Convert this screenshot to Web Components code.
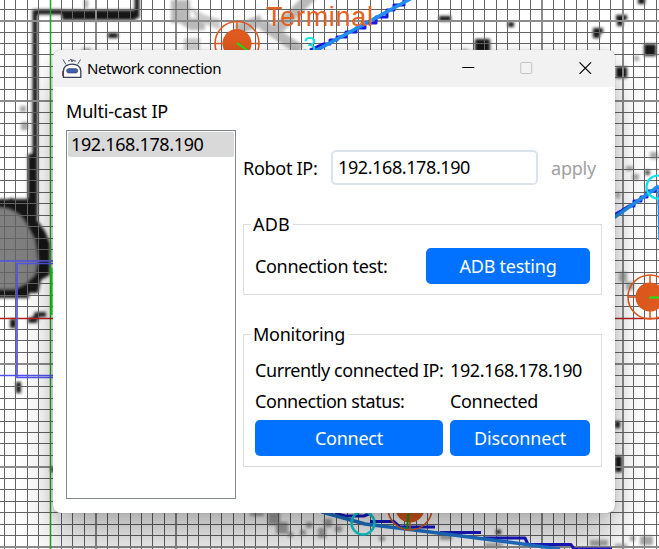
<!DOCTYPE html>
<html lang="en"><head><meta charset="utf-8"><title>Network connection</title>
<style>html,body{margin:0;width:659px;height:549px;overflow:hidden}body{font-family:"Noto Sans","Open Sans",sans-serif;font-size:18px;color:#000}</style></head>
<body>
<robot-desktop>
<map-canvas></map-canvas>
<app-window slot="window" heading="Network connection">
<network-panel></network-panel>
</app-window>
</robot-desktop>
<script>
class BaseElement extends HTMLElement{
  constructor(){super();this.attachShadow({mode:'open'}).innerHTML=this.render();}
  render(){return '<slot></slot>';}
}
customElements.define('robot-desktop',class extends BaseElement{
  render(){return `<style>:host{display:block;position:relative;width:659px;height:549px;overflow:hidden;background:#fff}
  ::slotted(app-window){position:absolute;left:53px;top:50px}</style><slot></slot><slot name="window"></slot>`;}
});
/* Spreads its text over a fixed advance width given by "fit". */
customElements.define('ui-text',class extends BaseElement{
  render(){return `<style>:host{display:inline-block;white-space:nowrap;line-height:24px}span{display:inline-block}</style><span><slot></slot></span>`;}
  connectedCallback(){
    const target=+this.getAttribute('fit');if(!target)return;
    const natural=this.shadowRoot.querySelector('span').getBoundingClientRect().width;
    this.style.letterSpacing=((target-natural)/this.textContent.length)+'px';
  }
});
customElements.define('map-canvas',class extends BaseElement{
  render(){
    let grid='';
    const wideX=[4,11,43,50],wideY=[-26,-19,4,13,20];
    for(let k=-4;k<=53;k++){const w=wideX.includes(k);grid+=`<rect x="${Math.floor(50+11.44*k)}" y="0" width="${w?2:1}" height="549" fill="${w?'#8c8c8c':'#646464'}"/>`;}
    for(let k=-27;k<=20;k++){const w=wideY.includes(k);grid+=`<rect x="0" y="${Math.floor(318.1+11.44*k)}" width="659" height="${w?2:1}" fill="${w?'#8c8c8c':'#646464'}"/>`;}
    const dot=(c,list)=>list.map(r=>`<rect x="${r[0]}" y="${r[1]}" width="${r[2]}" height="${r[3]}" fill="${c}"/>`).join('');
    const target=(x,y)=>`<g fill="none" stroke="#de5a1e" stroke-width="1.6"><circle cx="${x}" cy="${y}" r="22"/><path d="M${x} ${y-22}v8M${x} ${y+14}v8M${x-22} ${y}h8M${x+14} ${y}h8"/></g><circle cx="${x}" cy="${y}" r="14.5" fill="#de5a1e"/>`;
    return `<style>:host{display:block}svg{display:block}</style>
<svg width="659" height="549" viewBox="0 0 659 549">
<defs><filter id="soft" x="-10%" y="-10%" width="120%" height="120%"><feGaussianBlur stdDeviation="1.4"/></filter></defs>
<g filter="url(#soft)">
<path d="M35 219V12H62M62 15H134M137 18V-4" fill="none" stroke="#161616" stroke-width="5"/>
<rect x="62" y="10" width="74" height="10" fill="#161616"/>
<rect x="28" y="154" width="9" height="50" fill="#161616"/>
<path d="M-5 199H28V204H37V220L45 231L50 243V275L41 280L38 293H29V298H-5Z" fill="#151515"/>
<path d="M-5 207Q15 208 24 220L35 240L38 260L35 275L25 284L15 289H-5Z" fill="#808080"/>
<path d="M28 318V323H37L39 317H46V312H35L33 317Z" fill="#222"/>
<path d="M171 0H190V18H205V30H190L180 23H171Z" fill="#b9b9b9"/>
<path d="M184 38H200V50H184ZM188 6L205 15L220 19V30L200 22Z" fill="#cbcbcb"/>
<path d="M312 -5L275 32M262 24L300 50M262 20L236 30" stroke="#bababa" stroke-width="11" fill="none"/>
${dot('#161616',[[108,33,10,5],[475,39,15,14],[439,16,12,5],[508,22,6,5],[593,28,10,5],[593,31,7,7],[616,15,11,5],[617,19,6,7],[638,-2,7,6],[644,44,12,12],[616,67,11,11],[10,198,3,4],[10,319,6,9],[16,382,5,11],[615,421,5,7],[615,456,7,16],[51,467,4,5],[496,530,5,4]])}
${dot('#aaaaaa',[[82,48,9,5],[20,106,6,6],[21,122,7,8],[626,166,7,5],[632,174,7,6],[650,152,8,7],[619,272,8,10],[626,282,8,8],[616,192,4,6],[84,0,4,8],[462,49,6,3],[634,56,5,5]])}
${dot('#555',[[645,170,5,5]])}
${dot('#a5a5a5',[[250,512,14,4],[268,512,12,13],[276,522,12,12],[288,532,5,5],[300,530,6,5],[306,522,6,6],[324,519,8,8],[318,528,8,10],[335,526,7,6],[379,536,6,5],[440,534,12,6],[485,543,18,4],[590,540,18,6],[630,536,5,5],[640,536,13,9],[615,544,12,3]])}
</g>
${grid}
<path d="M50.5 0V549" stroke="#20a320" stroke-width="1.5"/><path d="M51.5 268V315" stroke="#12dd12" stroke-width="2"/>
<path d="M0 318.5H53M615 318.5H659" stroke="#b52020" stroke-width="1.5"/>
<g fill="none" stroke="#5454e8" stroke-width="1.7"><path d="M0 261H53M53 263.5H17V377.5H53M0 375.5H53"/></g>
<g fill="none" stroke-linejoin="round">
<path d="M310 50L323 44H330V40H337V37H346V32H356V28H365V23H376V17H387V10H394V5H404V0" stroke="#1818e8" stroke-width="3"/>
<path d="M308 55L412 -2" stroke="#208eee" stroke-width="3.5"/>
<path d="M612 216L621 211L629 206H634V201H641V197H647V191H655V188H659" stroke="#1919ec" stroke-width="3"/>
<path d="M612 219L659 186M659 190L660 240" stroke="#208eee" stroke-width="3.5"/>
<path d="M335 513L345 516H364L371 513M370 521.5H394L400 527H435M440 532.5H481M483 538H525L528 544.5H571L574 549H612" stroke="#1818c9" stroke-width="3"/>
<path d="M322 512L365 524L430 532L500 541L560 549" stroke="#2076d1" stroke-width="3.5"/>
</g>
${target(237,43.5)}${target(650,297)}${target(410,508)}
<path d="M237 43L255 56M649 297.5H659" stroke="#18e818" stroke-width="2"/><path d="M409 508L407 529" stroke="#14a014" stroke-width="2"/>
<circle cx="658" cy="187" r="11.5" fill="none" stroke="#12e4ec" stroke-width="2.2"/>
<circle cx="363" cy="523" r="11.5" fill="none" stroke="#10d9db" stroke-width="2.5"/>
<text x="303" y="54" font-family="Liberation Sans,sans-serif" font-size="24" fill="#12e4ec">3</text>
<text x="266" y="26" font-family="Liberation Sans,sans-serif" font-size="27" textLength="107" fill="#e36123">Terminal</text>
</svg>`;}
});
customElements.define('robot-icon',class extends BaseElement{
  render(){return `<style>:host,svg{display:block}</style><svg width="20" height="21" viewBox="0 0 20 21" fill="none">
<path d="M.8 13V18" stroke="#b44460" stroke-width="1.6"/><path d="M1 1.5L4 6.5M18.5 1.5L15.5 6.5M6 2.8H7.5L9 1L10 4L11 1.7L12 3H14" stroke="#4b5268" stroke-width="1"/>
<path d="M1.4 19.3V13C1.4 3.8 18.8 3.8 18.8 13V19.3Z" fill="#fff" stroke="#3c4358" stroke-width="1.3"/>
<rect x="4.7" y="10.7" width="11" height="4.2" rx="1.8" fill="#415faf" stroke="#35466f" stroke-width=".8"/></svg>`;}
});
customElements.define('app-window',class extends BaseElement{
  render(){return `<style>
:host{display:flex;flex-direction:column;width:562px;height:463px;box-sizing:border-box;border-radius:8px;background:#fff;overflow:hidden;box-shadow:0 0 1px #666,0 2px 16px rgba(0,0,0,.12),0 30px 38px rgba(0,0,0,.26)}
header{height:37px;background:#f2f2f2;display:flex;align-items:center;padding-left:9px;box-sizing:border-box;font-size:15px;flex:none}
header ui-text{padding-bottom:2px}
robot-icon{margin-right:5px}.controls{display:flex;margin-left:auto}.controls svg{display:block;width:58.5px;height:37px}
</style><header><robot-icon></robot-icon><ui-text fit="134">${this.getAttribute('heading')}</ui-text>
<div class="controls"><svg viewBox="0 0 58 37"><path d="M22 17.5H34" stroke="#000"/></svg><svg viewBox="0 0 58 37"><rect x="22.5" y="12.5" width="11" height="11" rx="1" fill="none" stroke="#c1c1c1"/></svg><svg viewBox="0 0 58 37"><path d="M22.3 12.3L33.8 23.8M33.8 12.3L22.3 23.8" stroke="#000" stroke-width="1.2"/></svg></div></header><slot></slot>`;}
});
customElements.define('ui-button',class extends BaseElement{
  render(){return `<style>:host{display:flex;align-items:center;justify-content:center;height:36px;border-radius:5px;background:#0072ff;color:#fff;box-sizing:border-box}</style><slot></slot>`;}
});
customElements.define('group-box',class extends BaseElement{
  render(){return `<style>:host{display:block}fieldset{margin:0;padding:0 11px;border:1px solid #dcdcdc;height:100%;box-sizing:border-box;min-width:0}legend{margin-left:-4px;padding:0 3px 0 2px;height:24px;line-height:24px}</style><fieldset><legend><slot name="title"></slot></legend><slot></slot></fieldset>`;}
});
customElements.define('network-panel',class extends BaseElement{
  render(){return `<style>
:host{display:grid;grid-template-columns:170px 359px;column-gap:7px;padding:12px 13px 14px;flex:1;box-sizing:border-box}
.left{display:flex;flex-direction:column}.left>ui-text{height:31px}
.list{height:369px;box-sizing:border-box;border:1px solid #828790;padding:1px}
.item{height:25px;background:#d9d9d9;border-radius:2px;padding:0 0 2px 3px;display:flex;align-items:center;box-sizing:border-box}
.right{display:flex;flex-direction:column;padding-top:51px}
.ip{display:flex;align-items:center;height:35px}
.ip>ui-text:first-child{width:76px}
.field{width:207px;height:35px;border:2px solid #dbe4ed;border-radius:5px;box-sizing:border-box;display:flex;align-items:center;padding:0 0 1px 5px;margin-left:12px}
.apply{color:#a0a0a0;margin-left:13px}
.adb{height:83px;margin-top:27px}.mon{height:145px;margin-top:27px}
.test{display:flex;align-items:center;justify-content:space-between;padding-top:12px}.test ui-button{width:164px}
.status{display:grid;grid-template-columns:188px 140px;column-gap:7px;grid-template-rows:31px 31px 36px;padding-top:12px}
</style>
<div class="left"><ui-text fit="102">Multi-cast IP</ui-text><div class="list"><div class="item"><ui-text fit="132.5">192.168.178.190</ui-text></div></div></div>
<div class="right"><div class="ip"><ui-text fit="74.5">Robot IP:</ui-text><div class="field"><ui-text fit="132">192.168.178.190</ui-text></div><ui-text class="apply" fit="45">apply</ui-text></div>
<group-box class="adb"><ui-text slot="title" fit="37">ADB</ui-text><div class="test"><ui-text fit="132.5">Connection test:</ui-text><ui-button><ui-text fit="97">ADB testing</ui-text></ui-button></div></group-box>
<group-box class="mon"><ui-text slot="title" fit="92">Monitoring</ui-text><div class="status"><ui-text fit="188.5">Currently connected IP:</ui-text><ui-text fit="132">192.168.178.190</ui-text><ui-text fit="149.5">Connection status:</ui-text><ui-text fit="88">Connected</ui-text><ui-button><ui-text fit="68">Connect</ui-text></ui-button><ui-button><ui-text fit="92">Disconnect</ui-text></ui-button></div></group-box>
</div>`;}
});
</script></body></html>
